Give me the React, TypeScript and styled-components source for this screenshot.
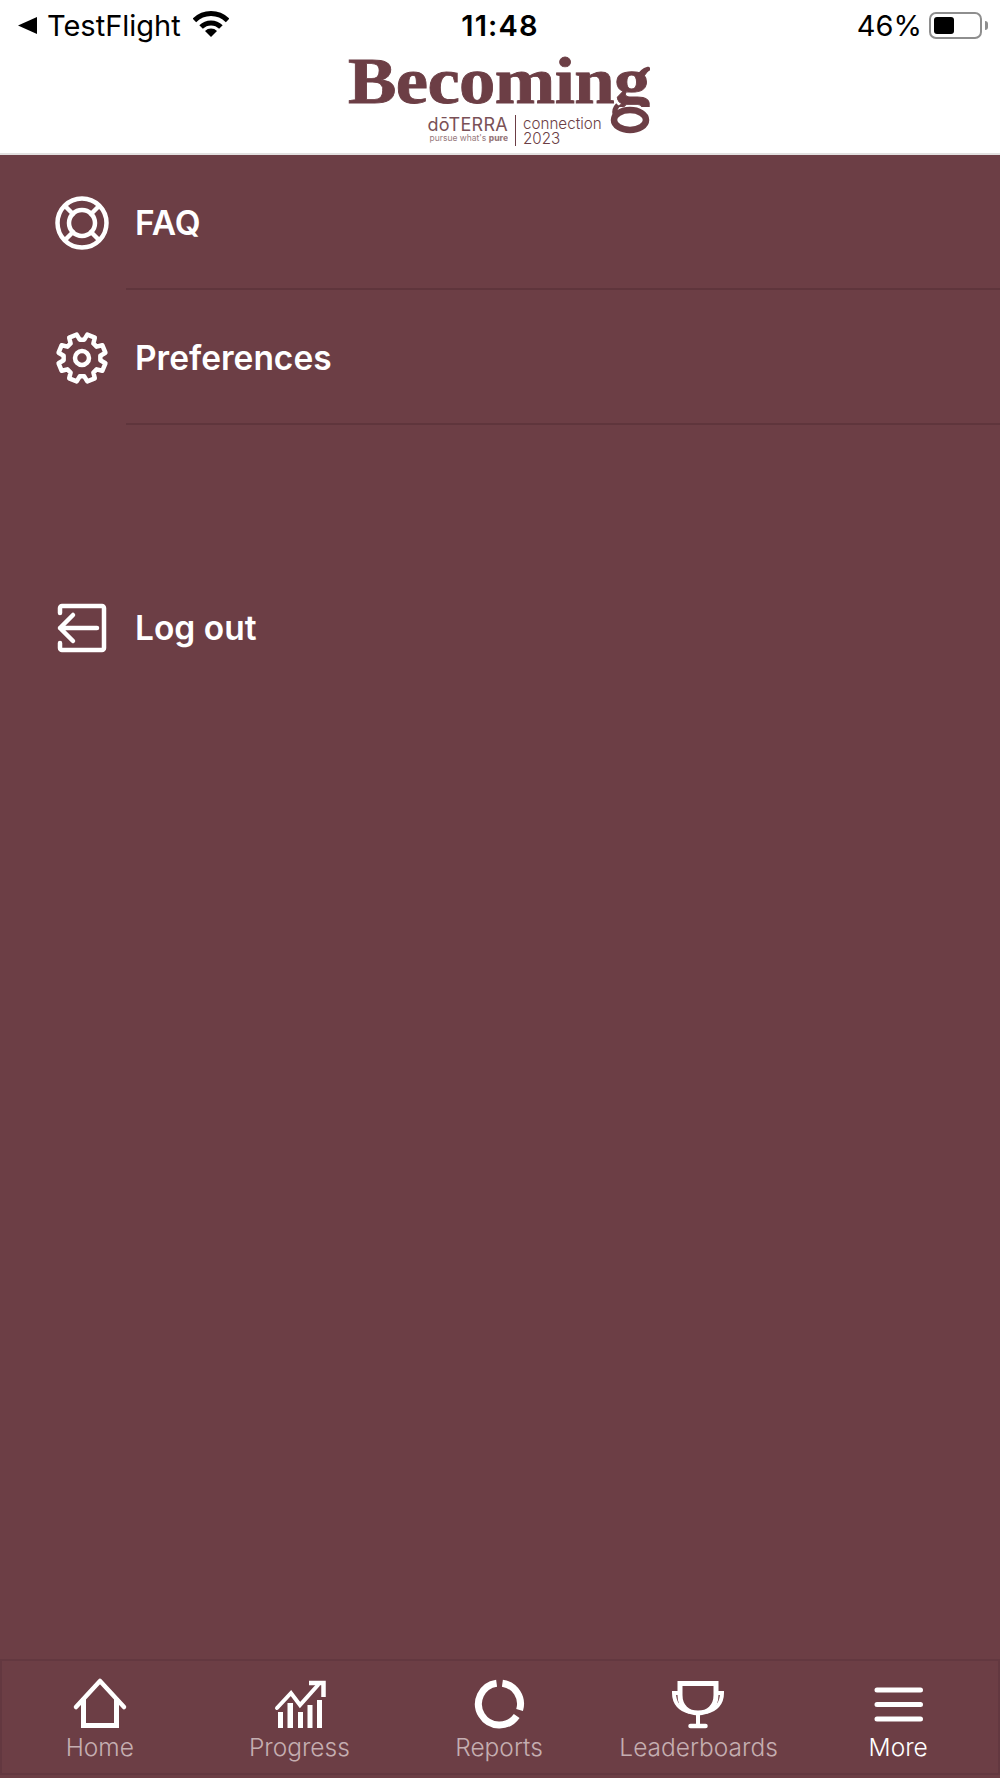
import { FC, ReactNode } from "react";
import styled, { createGlobalStyle } from "styled-components";

const MAROON = "#6c3e45";

const GlobalStyle = createGlobalStyle`
  html, body {
    margin: 0;
    padding: 0;
    background: ${MAROON};
  }
  * {
    box-sizing: border-box;
  }
`;

const Page = styled.div`
  width: 1000px;
  height: 1778px;
  display: flex;
  flex-direction: column;
  background: ${MAROON};
  font-family: Inter, "Noto Sans", sans-serif;
  overflow: hidden;
`;

const StatusBar = styled.div`
  height: 50px;
  flex: none;
  display: grid;
  grid-template-columns: 1fr auto 1fr;
  align-items: center;
  background: #fff;
  color: #000;
  font-size: 29px;
`;

const StatusLeft = styled.div`
  display: flex;
  align-items: center;
  padding-left: 18px;
`;

const StatusRight = styled.div`
  display: flex;
  align-items: center;
  justify-content: flex-end;
  padding-right: 12px;
`;

const Carrier = styled.span`
  margin-left: 10px;
`;

const WifiWrap = styled.span`
  display: flex;
  margin-left: 12px;
  margin-top: -4px;
`;

const Clock = styled.span`
  font-weight: 600;
  letter-spacing: 1.2px;
`;

const Percent = styled.span`
  margin-right: 7px;
`;

const Battery = styled.span`
  width: 53px;
  height: 27px;
  border: 2px solid #8e8e8e;
  border-radius: 7px;
  padding: 3px;
  display: flex;
`;

const BatteryFill = styled.span`
  width: 20px;
  background: #000;
  border-radius: 3px;
`;

const BatteryCap = styled.span`
  width: 3px;
  height: 9px;
  margin-left: 3px;
  background: #8e8e8e;
  border-radius: 0 3px 3px 0;
`;

const LogoBar = styled.div`
  height: 105px;
  flex: none;
  background: #fff;
  border-bottom: 2px solid #e2e0e0;
  display: flex;
  justify-content: center;
`;

const Logo = styled.div`
  width: 304px;
  height: 100px;
  color: ${MAROON};
  position: relative;
`;

// the lower bowl of the g is clipped here and drawn by LogoTail
const LogoWord = styled.span`
  position: absolute;
  left: 0;
  top: 1px;
  font-family: "Liberation Serif", serif;
  font-weight: 700;
  font-size: 66px;
  line-height: 60px;
  letter-spacing: -0.6px;
  white-space: nowrap;
  transform: scaleX(1.102);
  transform-origin: left top;
  clip-path: inset(0 0 4px 0);
  -webkit-text-stroke: 0.8px ${MAROON};
`;

const LogoTail = styled.svg`
  position: absolute;
  left: 250px;
  top: 0;
`;

const LogoSub = styled.div`
  position: absolute;
  left: 81px;
  top: 65px;
  display: flex;
  align-items: flex-start;
`;

const BrandCol = styled.div`
  width: 79px;
  display: flex;
  flex-direction: column;
  align-items: flex-end;
  padding-top: 2px;
  white-space: nowrap;
`;

const Brand = styled.span`
  font-size: 18px;
  line-height: 16px;
  letter-spacing: 0.3px;
  opacity: 0.9;
`;

const Tagline = styled.span`
  font-size: 8.5px;
  line-height: 11px;
  opacity: 0.7;
  b {
    font-weight: 800;
  }
`;

const SubRule = styled.span`
  width: 1px;
  height: 31px;
  margin: 0 7px;
  background: ${MAROON};
`;

const EventCol = styled.div`
  font-size: 15.2px;
  line-height: 15px;
  font-weight: 300;
  padding-top: 1px;
`;

const Menu = styled.div`
  flex: 1;
  display: flex;
  flex-direction: column;
`;

const Row = styled.div<{ $divider?: boolean }>`
  height: 135px;
  flex: none;
  position: relative;
  display: flex;
  align-items: center;
  padding-left: 55px;
  color: #fff;
  font-size: 33.5px;
  font-weight: 600;
  ${(p) =>
    p.$divider &&
    `
    &::after {
      content: "";
      position: absolute;
      left: 126px;
      right: 0;
      bottom: 0;
      height: 2px;
      background: #5f353c;
    }
  `}
`;

const RowIcon = styled.span`
  width: 54px;
  height: 54px;
  margin-right: 26px;
  display: flex;
`;

const RowGap = styled.div`
  height: 135px;
  flex: none;
`;

const TabBar = styled.div`
  height: 116px;
  flex: none;
  margin-bottom: 3px;
  box-shadow: inset 0 0 0 2px #633840;
  display: grid;
  grid-template-columns: repeat(5, 1fr);
  padding: 18px 2px 0 0;
`;

const Tab = styled.div<{ $active?: boolean }>`
  display: flex;
  flex-direction: column;
  align-items: center;
  color: ${(p) => (p.$active ? "#fff" : "#c5aeb1")};
  font-size: 24.5px;
  font-weight: 300;
  line-height: 28px;
  white-space: nowrap;
`;

const TabIcon = styled.span`
  width: 56px;
  height: 56px;
  display: flex;
  color: #fff;
`;

const ICON = {
  fill: "none",
  stroke: "currentColor",
  strokeLinecap: "round" as const,
  strokeLinejoin: "round" as const,
};

const gearPath = () => {
  const pts: string[] = [];
  for (let i = 0; i < 8; i++) {
    const a = ((i + 0.5) * Math.PI) / 4;
    const at = (r: number, d: number) =>
      `${(27 + r * Math.sin(a + d)).toFixed(2)} ${(27 - r * Math.cos(a + d)).toFixed(2)}`;
    pts.push(at(18.5, -0.27), at(24, -0.17), at(24, 0.17), at(18.5, 0.27));
  }
  return "M" + pts.join("L") + "Z";
};

const Wifi = () => (
  <svg width="36" height="28" viewBox="0 0 36 28" fill="none" stroke="#000" strokeWidth="5">
    <path d="M1.400 11.400A23.500 23.500 0 0 1 34.600 11.400" />
    <path d="M8.100 18.100A14 14 0 0 1 27.900 18.100" />
    <path d="M18 28L12 22A8.500 8.500 0 0 1 24 22Z" fill="#000" stroke="none" />
  </svg>
);

const LifeRing = () => (
  <svg width="54" height="54" viewBox="0 0 54 54" {...ICON} strokeWidth="4.5">
    <circle cx="27" cy="27" r="24.500" />
    <circle cx="27" cy="27" r="13" />
    <path d="M10 10l8 8M44 10l-8 8M10 44l8-8M44 44l-8-8" />
  </svg>
);

const Gear = () => (
  <svg width="54" height="54" viewBox="0 0 54 54" {...ICON} strokeWidth="4.5">
    <path d={gearPath()} />
    <circle cx="27" cy="27" r="7" />
  </svg>
);

const LogOut = () => (
  <svg width="54" height="54" viewBox="0 0 54 54" {...ICON} strokeWidth="4.5">
    <path d="M5 12V7a2 2 0 0 1 2-2h40a2 2 0 0 1 2 2v40a2 2 0 0 1-2 2H7a2 2 0 0 1-2-2v-5" />
    <path d="M5 27h37M18 14L5 27l13 13" />
  </svg>
);

const Home = () => (
  <svg width="56" height="54" viewBox="0 0 56 54" fill="none" stroke="currentColor">
    <path d="M4 30L28 4l24 26" strokeWidth="4.500" strokeLinecap="round" strokeLinejoin="round" />
    <path d="M11.500 21v27.500h33V21" strokeWidth="5" />
  </svg>
);

const Progress = () => (
  <svg width="56" height="54" viewBox="0 0 56 54" fill="currentColor">
    <path d="M6 31L20 16l9 12L47 8" fill="none" stroke="currentColor" strokeWidth="4" strokeLinecap="round" />
    <path d="M38 6h14.500v14" fill="none" stroke="currentColor" strokeWidth="4.500" />
    <rect x="7" y="35" width="5" height="16" />
    <rect x="16.500" y="26" width="5.500" height="25" />
    <rect x="27" y="35" width="5" height="16" />
    <rect x="36.500" y="28" width="5" height="23" />
    <rect x="46" y="23" width="5" height="28" />
  </svg>
);

const Donut = () => (
  <svg width="56" height="54" viewBox="0 0 56 54" fill="none" stroke="currentColor" strokeWidth="7">
    <path d="M31.400 6.200A21 21 0 0 1 48.600 33.100" />
    <path d="M45.700 39A21 21 0 1 1 25.600 6.200" />
  </svg>
);

const Trophy = () => (
  <svg width="56" height="54" viewBox="0 0 56 54" fill="none" stroke="currentColor" strokeWidth="4">
    <path d="M9 6.500H45V18C45 30 37 36 27 36S9 30 9 18Z" strokeWidth="5" />
    <path d="M9 16H3C3 26 9 33 19 35M45 16h6C51 26 45 33 35 35" />
    <path d="M27 36V49" />
    <path d="M19.500 49H34.500" strokeWidth="4.500" strokeLinecap="round" />
  </svg>
);

const Burger = () => (
  <svg width="56" height="54" viewBox="0 0 56 54" fill="none" stroke="currentColor" strokeWidth="5" strokeLinecap="round">
    <path d="M7 13H50.500M7 27.500H50.500M7 42H50.500" />
  </svg>
);

interface ITab {
  label: string;
  icon: ReactNode;
  active?: boolean;
}

const TABS: ITab[] = [
  { label: "Home", icon: <Home /> },
  { label: "Progress", icon: <Progress /> },
  { label: "Reports", icon: <Donut /> },
  { label: "Leaderboards", icon: <Trophy /> },
  { label: "More", icon: <Burger />, active: true },
];

const App: FC = () => {
  return (
    <Page>
      <GlobalStyle />
      <StatusBar>
        <StatusLeft>
          <svg width="19" height="17" viewBox="0 0 19 17">
            <path d="M0 8.500L19 0v17z" fill="#000" />
          </svg>
          <Carrier>TestFlight</Carrier>
          <WifiWrap>
            <Wifi />
          </WifiWrap>
        </StatusLeft>
        <Clock>11:48</Clock>
        <StatusRight>
          <Percent>46%</Percent>
          <Battery>
            <BatteryFill />
          </Battery>
          <BatteryCap />
        </StatusRight>
      </StatusBar>
      <LogoBar>
        <Logo>
          <LogoWord>Becoming</LogoWord>
          <LogoTail width="52" height="86" viewBox="0 0 52 86" fill="none">
            <path d="M40 28c3-6 6-8 10-9" stroke={MAROON} strokeWidth="4.500" strokeLinecap="round" />
            <ellipse cx="32" cy="70" rx="16" ry="10" stroke={MAROON} strokeWidth="6.500" />
            <path d="M20 55c-3 3-4 6-3 10" stroke={MAROON} strokeWidth="5" />
          </LogoTail>
          <LogoSub>
            <BrandCol>
              <Brand>dōTERRA</Brand>
              <Tagline>
                pursue what's <b>pure</b>
              </Tagline>
            </BrandCol>
            <SubRule />
            <EventCol>
              connection
              <br />
              2023
            </EventCol>
          </LogoSub>
        </Logo>
      </LogoBar>
      <Menu>
        <Row $divider>
          <RowIcon>
            <LifeRing />
          </RowIcon>
          FAQ
        </Row>
        <Row $divider>
          <RowIcon>
            <Gear />
          </RowIcon>
          Preferences
        </Row>
        <RowGap />
        <Row>
          <RowIcon>
            <LogOut />
          </RowIcon>
          Log out
        </Row>
      </Menu>
      <TabBar>
        {TABS.map((tab) => (
          <Tab key={tab.label} $active={tab.active}>
            <TabIcon>{tab.icon}</TabIcon>
            {tab.label}
          </Tab>
        ))}
      </TabBar>
    </Page>
  );
};

export default App;
